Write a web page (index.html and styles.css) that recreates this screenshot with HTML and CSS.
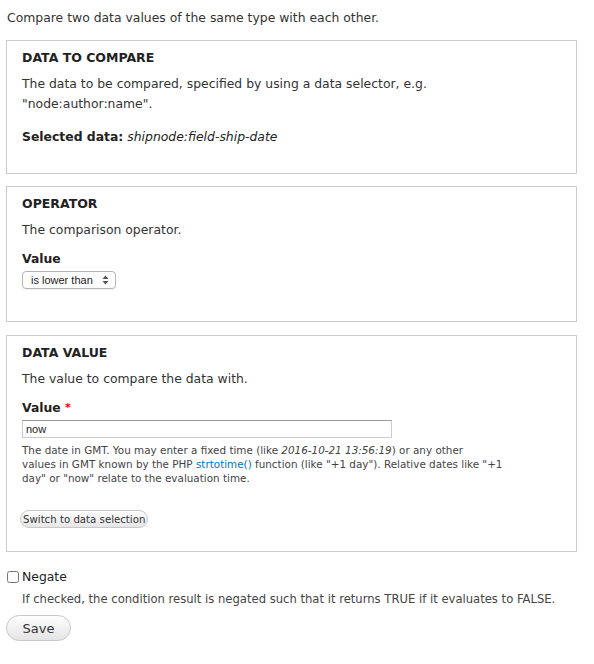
FILE: index.html
```html
<!DOCTYPE html>
<html>
<head>
  <title>Condition: Data comparison</title>
  <link rel="stylesheet" href="styles.css">
</head>
<body>
  <p class="intro">Compare two data values of the same type with each other.</p>

  <div class="fieldset fieldset-data">
    <div class="legend">Data to compare</div>
    <p class="desc">The data to be compared, specified by using a data selector, e.g. "node:author:name".</p>
    <p class="selected"><strong>Selected data:</strong> <em>shipnode:field-ship-date</em></p>
  </div>

  <div class="fieldset fieldset-op">
    <div class="legend">Operator</div>
    <p class="desc">The comparison operator.</p>
    <label class="label" for="op">Value</label>
    <span class="select-wrap">
      <select id="op" class="select">
        <option>is lower than</option>
      </select>
      <svg class="select-arrows" width="7" height="10" viewBox="0 0 7 10">
        <path d="M3.5 0.5 L6.5 4 L0.5 4 Z M3.5 9.5 L6.5 6 L0.5 6 Z" fill="#555"/>
      </svg>
    </span>
  </div>

  <div class="fieldset fieldset-value">
    <div class="legend">Data value</div>
    <p class="desc">The value to compare the data with.</p>
    <label class="label" for="val">Value <span class="req">*</span></label>
    <input id="val" class="text-input" type="text" value="now">
    <div class="help">The date in GMT. You may enter a fixed time (like <em>2016-10-21 13:56:19</em>) or any other<br>values in GMT known by the PHP <a href="#">strtotime()</a> function (like "+1 day"). Relative dates like "+1 day" or "now" relate to the evaluation time.</div>
    <button class="btn-small" type="button">Switch to data selection</button>
  </div>

  <div class="checkbox-row">
    <input id="negate" type="checkbox" class="checkbox">
    <label for="negate">Negate</label>
  </div>
  <div class="checkbox-help">If checked, the condition result is negated such that it returns TRUE if it evaluates to FALSE.</div>

  <button class="btn-save" type="submit">Save</button>
</body>
</html>
```

FILE: styles.css
```css
body {
  margin: 0;
  padding: 0 17px 0 6px;
  font-family: "DejaVu Sans", Verdana, sans-serif;
  font-size: 12.4px;
  color: #333;
  background: #fff;
}
p {
  margin: 0;
}
.intro {
  padding: 9px 0 0 1px;
  line-height: 18px;
  height: 31px;
}
.fieldset {
  border: 1px solid #ccc;
  padding: 9px 15px 0 15px;
  box-sizing: border-box;
}
.fieldset-data {
  height: 134px;
  margin-bottom: 12px;
}
.fieldset-data .desc {
  margin-bottom: 13px;
}
.fieldset-op {
  height: 136px;
  margin-bottom: 13px;
}
.fieldset-value {
  height: 217px;
}
.legend {
  font-weight: bold;
  text-transform: uppercase;
  color: #222;
  font-size: 12.5px;
  line-height: 16px;
  height: 24px;
}
.desc {
  line-height: 20px;
  color: #333;
  margin-bottom: 10px;
}
.selected {
  line-height: 20px;
  color: #222;
}
.label {
  display: block;
  font-weight: bold;
  color: #222;
  line-height: 18px;
}
.req {
  color: #e00;
  font-size: 11px;
  vertical-align: top;
}
.select-wrap {
  position: relative;
  display: inline-block;
  margin-top: 3px;
}
.select {
  -webkit-appearance: none;
  appearance: none;
  display: block;
  width: 94px;
  height: 18px;
  padding: 0 0 0 8px;
  border: 1px solid #b4b4b4;
  border-radius: 4px;
  background: #fff;
  font-family: "Liberation Sans", Arial, sans-serif;
  font-size: 11px;
  color: #222;
  box-shadow: 0 1px 0 rgba(0,0,0,0.05);
}
.select-arrows {
  position: absolute;
  right: 7px;
  top: 4px;
  pointer-events: none;
}
.text-input {
  display: block;
  box-sizing: border-box;
  width: 370px;
  height: 18px;
  margin: 3px 0 0;
  padding: 0 3px;
  border: 1px solid #ccc;
  border-top-color: #999;
  font-family: "Liberation Sans", Arial, sans-serif;
  font-size: 11px;
  color: #222;
}
.help {
  max-width: 490px;
  margin-top: 5px;
  line-height: 14px;
  color: #444;
  font-size: 10.4px;
}
.help a {
  color: #0074bd;
  text-decoration: none;
}
.btn-small {
  display: block;
  margin: 25px 0 0 -2px;
  height: 18px;
  padding: 0 2px;
  border: 1px solid #c8c8c8;
  border-radius: 9px;
  background: linear-gradient(#fefefe, #e6e6e6);
  font-family: "DejaVu Sans", Verdana, sans-serif;
  font-size: 10.2px;
  color: #333;
}
.checkbox-row {
  display: flex;
  align-items: center;
  gap: 3px;
  margin-top: 16px;
  line-height: 18px;
  color: #222;
}
.checkbox {
  margin: 0 0 0 1px;
  width: 12px;
  height: 12px;
}
.checkbox-help {
  margin: 6px 0 0 16px;
  line-height: 14px;
  font-size: 11.6px;
  color: #444;
}
.btn-save {
  display: block;
  margin-top: 9px;
  width: 65px;
  height: 26px;
  border: 1px solid #c8c8c8;
  border-radius: 13px;
  background: linear-gradient(#fefefe, #e4e4e4);
  font-family: "DejaVu Sans", Verdana, sans-serif;
  font-size: 13px;
  color: #333;
}
```
